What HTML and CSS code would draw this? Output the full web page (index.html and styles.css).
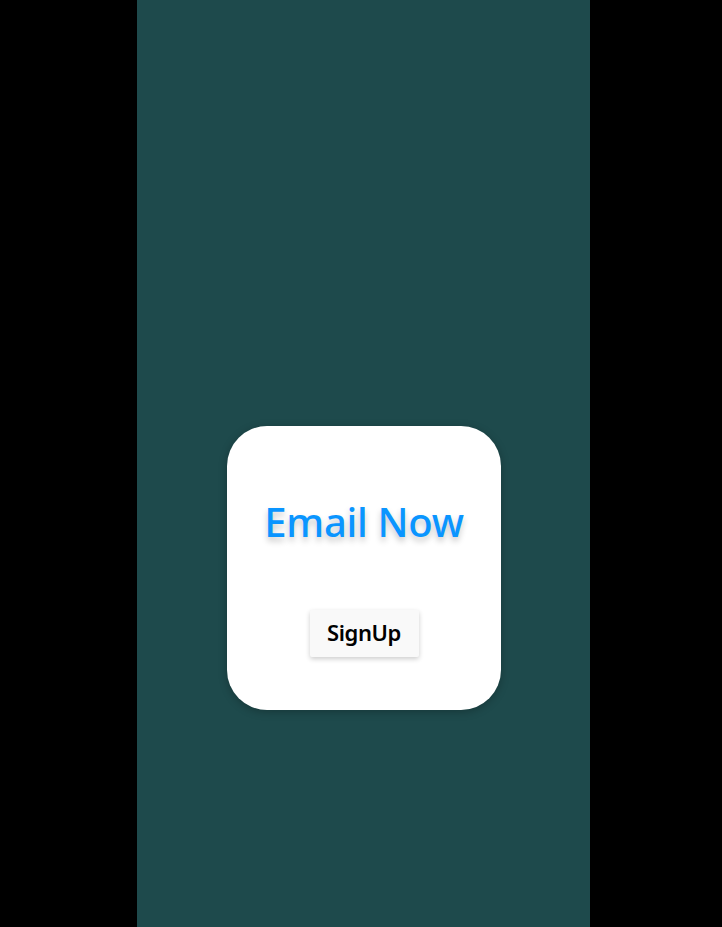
FILE: index.html
```html
<!DOCTYPE html>
<html lang="en">
<head>
<meta charset="utf-8">
<title>Email Now</title>
<link rel="stylesheet" href="styles.css">
</head>
<body>
  <main class="page">
    <section class="card">
      <h1 class="title">Email Now</h1>
      <button class="btn" type="button">SignUp</button>
    </section>
  </main>
</body>
</html>
```
FILE: styles.css
```css
html, body {
  margin: 0;
  padding: 0;
  background: #000;
}
body {
  font-family: "Noto Sans", "Open Sans", sans-serif;
}
.page {
  box-sizing: border-box;
  width: 453px;
  min-height: 100vh;
  margin-left: 137px;
  background: #1e4a4c;
  padding-top: 426px;
  display: flex;
  flex-direction: column;
  align-items: center;
}
.card {
  box-sizing: border-box;
  width: 274px;
  height: 284px;
  margin-left: 1px;
  background: #fff;
  border-radius: 40px;
  box-shadow: 0 2px 8px rgba(0, 0, 0, 0.25);
  padding-top: 72px;
  display: flex;
  flex-direction: column;
  align-items: center;
}
.title {
  margin: 0;
  font-size: 40px;
  line-height: 48px;
  font-weight: 500;
  letter-spacing: -0.3px;
  color: #0a95ff;
  text-shadow: 0 4px 6px rgba(0, 0, 0, 0.22);
}
.btn {
  margin-top: 64px;
  box-sizing: border-box;
  height: 47px;
  width: 109px;
  border: none;
  border-radius: 2px;
  background: #f9f9f9;
  box-shadow: 0 2px 5px rgba(0, 0, 0, 0.2);
  font-family: "Noto Sans", "Open Sans", sans-serif;
  font-size: 22px;
  font-weight: 600;
  letter-spacing: -0.4px;
  color: #000;
  padding: 0 0 4px;
}
```
